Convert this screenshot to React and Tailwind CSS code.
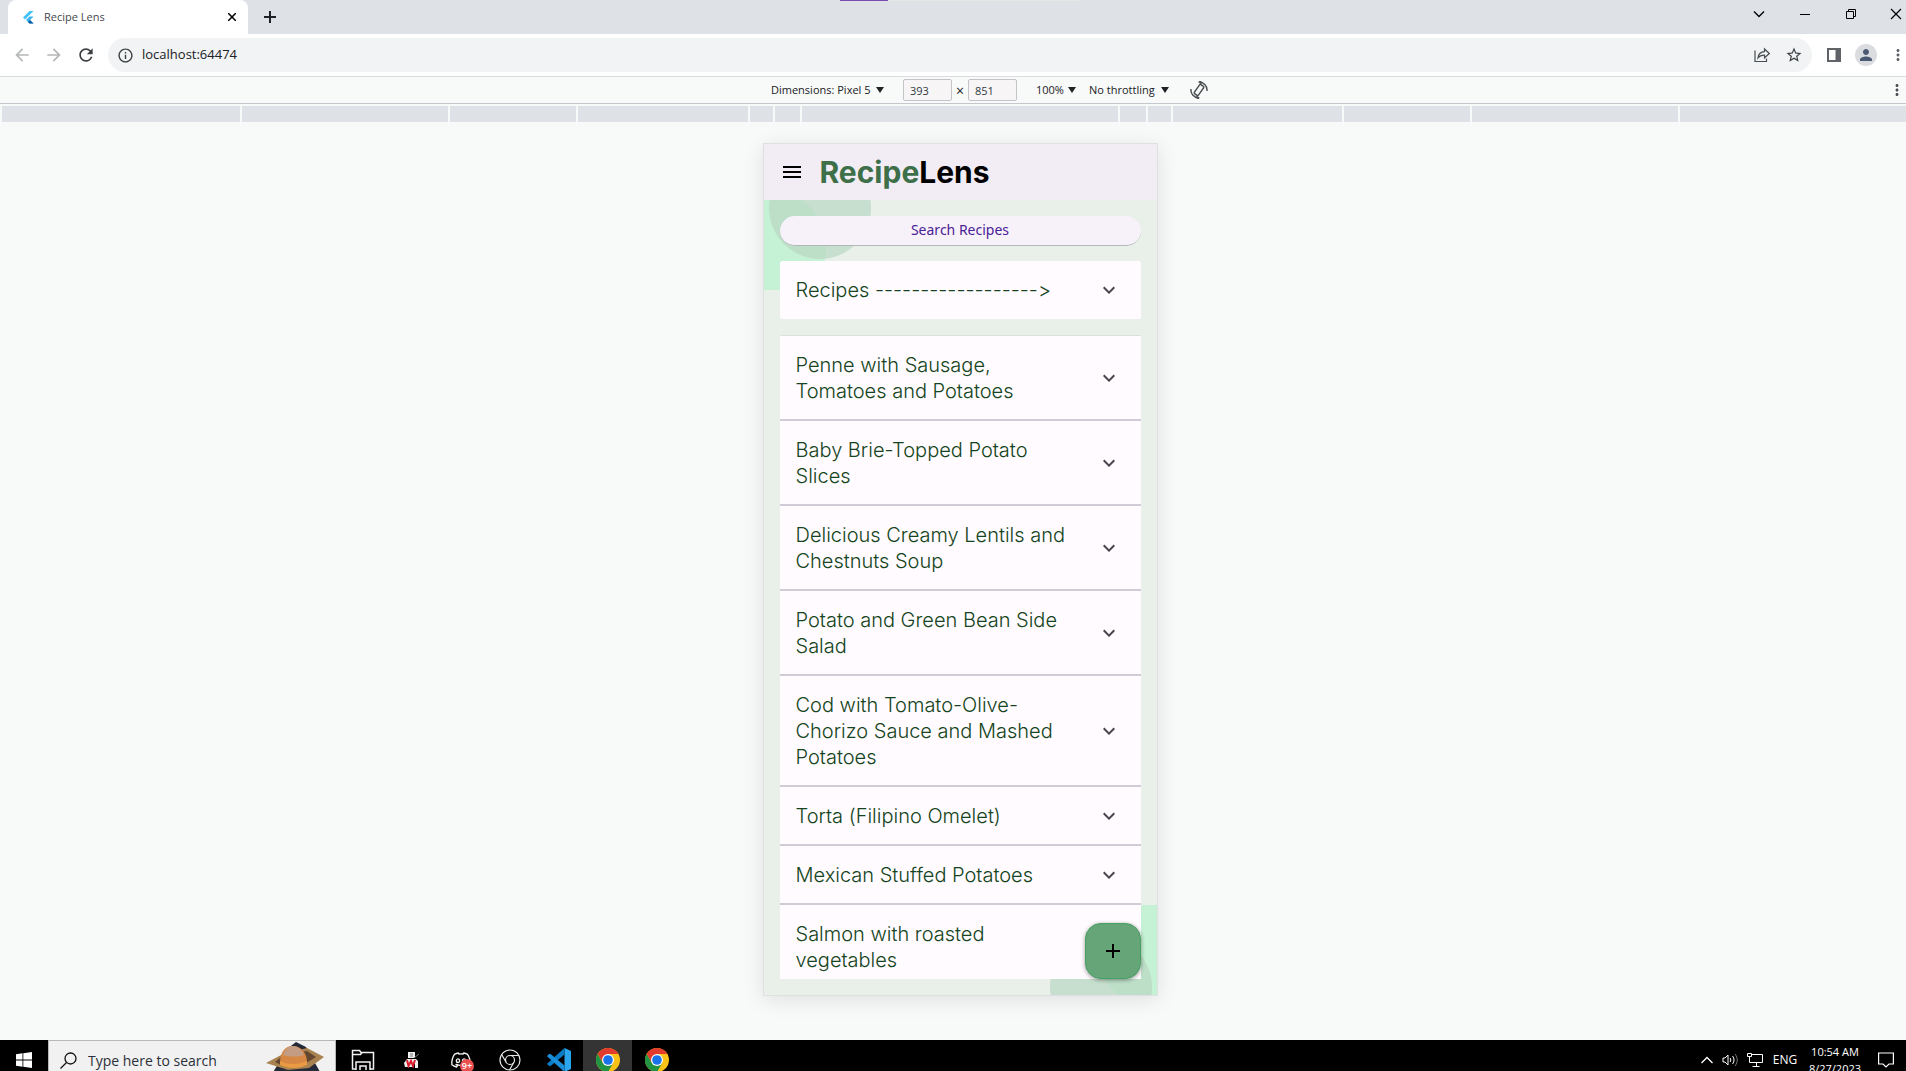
import React from 'react';
import {
  MdAdd,
  MdArrowBack,
  MdArrowForward,
  MdExpandMore,
  MdInfoOutline,
  MdMenu,
  MdMoreVert,
  MdPerson,
  MdRefresh,
  MdStarBorder,
} from 'react-icons/md';
import { FaDiscord } from 'react-icons/fa';

const recipes = [
  'Penne with Sausage, Tomatoes and Potatoes',
  'Baby Brie-Topped Potato Slices',
  'Delicious Creamy Lentils and Chestnuts Soup',
  'Potato and Green Bean Side Salad',
  'Cod with Tomato-Olive-Chorizo Sauce and Mashed Potatoes',
  'Torta (Filipino Omelet)',
  'Mexican Stuffed Potatoes',
  'Salmon with roasted vegetables',
];

// Device width presets shown on the ruler
const rulerSegments = [
  'w-[238px]', 'w-[206px]', 'w-[126px]', 'w-[170px]', 'w-[23px]', 'w-[25px]',
  'w-[316px]', 'w-[26px]', 'w-[23px]', 'w-[169px]', 'w-[126px]', 'w-[206px]',
];

function FlutterLogo() {
  return (
    <svg className="h-4 w-4" viewBox="0 0 16 16">
      <path d="M9.500 2 3 8.500l2 2L13.500 2z" fill="#42c3f7" />
      <path d="M9.500 7.500 6 11l3.500 3.500h4L10 11l3.500-3.500z" fill="#3ab4ee" />
      <path d="m8 13 1.500 1.500h4L10 11z" fill="#0d5aa0" />
    </svg>
  );
}

function TabStrip() {
  return (
    <header className="relative flex h-[34px] bg-[#dee1e6] pl-2">
      <div className="absolute left-[840px] top-0 flex h-px w-[241px] bg-[#e6e6e6]">
        <div className="w-12 bg-[#7a4bb0]" />
      </div>
      <div className="flex w-60 items-center rounded-t-lg bg-white pl-3 pr-2 text-[#45494d]">
        <FlutterLogo />
        <span className="ml-2 flex-1 text-[11px]">Recipe Lens</span>
        <button type="button" aria-label="Close tab" className="flex h-4 w-4 items-center justify-center text-black">
          <svg className="h-2 w-2" viewBox="0 0 8 8" stroke="currentColor" strokeWidth="1.5">
            <path d="M0 0l8 8M8 0L0 8" />
          </svg>
        </button>
      </div>
      <button type="button" aria-label="New tab" className="flex w-11 items-center justify-center text-[#202124]">
        <svg className="h-3 w-3" viewBox="0 0 12 12" stroke="currentColor" strokeWidth="2">
          <path d="M6 0v12M0 6h12" />
        </svg>
      </button>
      <div className="ml-auto flex h-7 text-black">
        <button type="button" aria-label="Search tabs" className="flex w-[46px] items-center justify-center">
          <svg className="h-3 w-3" viewBox="0 0 12 12" fill="none" stroke="currentColor" strokeWidth="1.3">
            <path d="M1 3.500l5 5 5-5" />
          </svg>
        </button>
        <button type="button" aria-label="Minimize" className="flex w-[46px] items-center justify-center">
          <svg className="h-3 w-3" viewBox="0 0 12 12" stroke="currentColor">
            <path d="M1 6.500h10" />
          </svg>
        </button>
        <button type="button" aria-label="Restore" className="flex w-[46px] items-center justify-center">
          <svg className="h-3 w-3" viewBox="0 0 12 12" fill="none" stroke="currentColor">
            <path d="M1.500 3.500h7v7h-7zM3.500 3.500v-2h7v7h-2" />
          </svg>
        </button>
        <button type="button" aria-label="Close" className="flex w-8 items-center justify-end pr-1">
          <svg className="h-3 w-3" viewBox="0 0 12 12" stroke="currentColor" strokeWidth="1.2">
            <path d="M1 1l10 10M11 1L1 11" />
          </svg>
        </button>
      </div>
    </header>
  );
}

function AddressBar() {
  return (
    <nav className="flex h-[43px] items-center border-b border-[#d9dbde] bg-white text-[#5f6368]">
      <div className="flex w-[108px] items-center gap-3 pl-3">
        <button type="button" aria-label="Back" className="text-[#b5b7b9]"><MdArrowBack size={20} /></button>
        <button type="button" aria-label="Forward" className="text-[#b5b7b9]"><MdArrowForward size={20} /></button>
        <button type="button" aria-label="Reload" className="text-[#3c4043]"><MdRefresh size={20} /></button>
      </div>
      <div className="flex h-[34px] flex-1 items-center rounded-full bg-[#f1f3f4] px-[9px]">
        <MdInfoOutline size={17} className="text-[#3c4043]" />
        <input
          type="text"
          aria-label="Address"
          defaultValue="localhost:64474"
          className="ml-2 flex-1 bg-transparent text-[13px] text-[#202124] outline-none"
        />
        <button type="button" aria-label="Share" className="mr-[15px] text-[#4a4d51]">
          <svg className="h-4 w-4" viewBox="0 0 16 16" fill="none" stroke="currentColor" strokeWidth="1.2">
            <path d="M1 3.500v11h11.500v-3M4 11c.3-4 2.500-6 6.500-6.300V2l4.800 4.500-4.800 4.300V8.200C7.500 8 5.500 9 4 11z" />
          </svg>
        </button>
        <button type="button" aria-label="Bookmark" className="text-[#3c4043]"><MdStarBorder size={18} /></button>
      </div>
      <div className="flex w-[94px] items-center pl-[15px]">
        <button type="button" aria-label="Side panel" className="shrink-0">
          <svg className="h-[14px] w-[14px]" viewBox="0 0 14 14">
            <path fillRule="evenodd" d="M0 0h14v14H0zM2 2v10h6.500V2z" fill="currentColor" />
          </svg>
        </button>
        <button
          type="button"
          aria-label="Profile"
          className="ml-[14px] flex h-[22px] w-[22px] shrink-0 items-center justify-center rounded-full bg-[#dadce0] text-[#4c5972]"
        >
          <MdPerson size={18} />
        </button>
        <button type="button" aria-label="Menu" className="ml-3 shrink-0"><MdMoreVert size={18} /></button>
      </div>
    </nav>
  );
}

function ToolbarSelect({ label, options, className }) {
  return (
    <div className={`relative flex items-center ${className}`}>
      <select aria-label={label} className="w-full appearance-none bg-transparent outline-none">
        {options.map((option) => (
          <option key={option}>{option}</option>
        ))}
      </select>
      <svg className="pointer-events-none absolute right-0 h-[6px] w-2" viewBox="0 0 8 6">
        <path d="M0 0h8L4 6z" fill="#202124" />
      </svg>
    </div>
  );
}

function RotateIcon() {
  return (
    <svg className="h-[18px] w-[18px]" viewBox="0 0 18 18" fill="none" stroke="currentColor" strokeWidth="1.400">
      <rect x="6.500" y="3.500" width="5" height="11" rx="1" transform="rotate(35 9 9)" />
      <path d="M1 8a8 8 0 0 0 8 9M17 10a8 8 0 0 0-8-9" />
      <path d="m6.500 14.500 3 2.400-2.500 1zM11.500 3.500l-3-2.400 2.500-1z" fill="currentColor" strokeWidth="0.500" />
    </svg>
  );
}

function DeviceToolbar() {
  const inputClass =
    'h-[22px] rounded-[2px] border border-[#c4c4c8] bg-[#f7f5f6] pl-[6px] text-[#303942] outline-none';

  return (
    <div className="flex h-[27px] items-center border-b border-[#c4c7cb] text-[11px] text-[#202124]">
      <div className="flex flex-1 items-center justify-center pl-[91px]">
        <ToolbarSelect label="Device" options={['Dimensions: Pixel 5']} className="w-[113px]" />
        <input type="text" aria-label="Width" defaultValue="393" className={`ml-[19px] w-[49px] ${inputClass}`} />
        <span className="w-4 text-center text-[14px]">×</span>
        <input type="text" aria-label="Height" defaultValue="851" className={`w-[49px] ${inputClass}`} />
        <ToolbarSelect label="Zoom" options={['100%']} className="ml-[19px] w-10" />
        <ToolbarSelect label="Throttling" options={['No throttling']} className="ml-[13px] w-20" />
        <button type="button" aria-label="Rotate" className="ml-[21px] text-[#4a4d51]">
          <RotateIcon />
        </button>
      </div>
      <button type="button" aria-label="More options" className="text-[#4a4d51]"><MdMoreVert size={18} /></button>
    </div>
  );
}

function Ruler() {
  return (
    <div className="flex gap-[2px] pl-[2px] pt-[2px]">
      {rulerSegments.map((width, index) => (
        <div key={index} className={`h-4 shrink-0 bg-[#dee1e6] ${width}`} />
      ))}
      <div className="h-4 flex-1 bg-[#dee1e6]" />
    </div>
  );
}

// Overlapping leaf coloured circles in two corners of the page
function CornerCircles({ className }) {
  return (
    <svg className={`absolute h-[90px] w-[107px] ${className}`} viewBox="0 0 107 90">
      <circle cx="2" cy="48" r="60" fill="#c5f1d4" />
      <circle cx="56" cy="8" r="51" fill="#b9d7c3" fillOpacity="0.700" />
    </svg>
  );
}

function RecipeTile({ title, className = '' }) {
  return (
    <button
      type="button"
      className={`flex w-full items-center bg-[#fffbff] pl-4 pr-5 pt-4 text-left text-[20px] leading-[26px] font-light text-[#144420] ${className}`}
    >
      <span className="w-[276px]">{title}</span>
      <MdExpandMore size={24} className="ml-auto shrink-0 text-[#49454f]" />
    </button>
  );
}

function RecipeApp() {
  return (
    <div className="relative flex h-[853px] w-[395px] flex-col overflow-hidden border border-[#dfdfe4] bg-[#e8f0e9] font-['Inter',sans-serif] [font-variant-ligatures:none] shadow-[0_4px_20px_rgba(0,0,0,0.10)]">
      <div className="flex h-14 shrink-0 items-center bg-[#f2edf5] pl-4">
        <button type="button" aria-label="Open menu" className="text-black"><MdMenu size={24} /></button>
        <h1 className="ml-4 text-[30px] font-bold text-black">
          <span className="text-[#3d6f49]">Recipe</span>Lens
        </h1>
      </div>
      <div className="relative flex min-h-0 flex-1 flex-col p-4">
        <CornerCircles className="left-0 top-0" />
        <CornerCircles className="bottom-0 right-0 rotate-180" />
        <div className="relative flex min-h-0 flex-1 flex-col overflow-hidden">
          <button
            type="button"
            className="mb-[15px] flex h-[30px] shrink-0 items-center justify-center rounded-full border-b border-[#b4b7b8] bg-[#f7f2fa] pb-[2px] font-['Noto_Sans',sans-serif] text-[14px] text-[#4a2196]"
          >
            Search Recipes
          </button>
          <RecipeTile title="Recipes ------------------>" className="shrink-0 rounded-[2px] pb-4" />
          <div className="mt-4 rounded-t-[2px] border-t border-[#dadfda]">
            {recipes.map((recipe) => (
              <RecipeTile key={recipe} title={recipe} className="border-b-2 border-[#d0cbd6] pb-[15px]" />
            ))}
          </div>
        </div>
        <button
          type="button"
          aria-label="Add recipe"
          className="absolute bottom-4 right-4 flex h-14 w-14 items-center justify-center rounded-2xl border border-[#45a062] bg-[#65a578] text-black shadow-[0_1px_4px_rgba(0,0,0,0.4)]"
        >
          <MdAdd size={24} />
        </button>
      </div>
    </div>
  );
}

function ChromeIcon() {
  return (
    <svg className="h-6 w-6" viewBox="0 0 24 24">
      <circle cx="12" cy="12" r="12" fill="#fbc116" />
      <path d="M1.600 6A12 12 0 0 1 22.400 6H12L6.800 15z" fill="#e33b2e" />
      <path d="M1.600 6A12 12 0 0 0 12 24l5.200-9H6.800z" fill="#229342" />
      <circle cx="12" cy="12" r="6" fill="#fff" />
      <circle cx="12" cy="12" r="4.800" fill="#1a73e8" />
    </svg>
  );
}

function ChromeOutlineIcon() {
  return (
    <svg className="h-[22px] w-[22px]" viewBox="0 0 22 22" fill="none" stroke="#e8e8e8" strokeWidth="1.2">
      <circle cx="11" cy="11" r="10" />
      <circle cx="11" cy="11" r="4.500" />
      <path d="M11 6.500h9M7.100 13.300 2.600 5.500M14.900 13.300 10.500 21" />
    </svg>
  );
}

function CodeIcon() {
  return (
    <svg className="h-6 w-6" viewBox="0 0 24 24">
      <path d="M17.500 0 24 3v18l-6.500 3z" fill="#2aa5ee" />
      <path d="M17.500 0v6.500L3.300 18.200 1 17.200l-1-1.500z" fill="#0a7bc4" />
      <path d="M17.500 24v-6.500L3.300 5.800 1 6.800 0 8.300z" fill="#1a8ed8" />
    </svg>
  );
}

function ExplorerIcon() {
  return (
    <svg className="h-[22px] w-6" viewBox="0 0 24 22" fill="none" stroke="#f2f2f2" strokeWidth="1.500">
      <path d="M5 20H1.500V1.500h7l1.500 2h12.500V20H19M1.500 5.500h8l1.500-2M5 21v-8h14v8M9 21v-4h6v4" />
    </svg>
  );
}

function RobotIcon() {
  return (
    <svg className="h-4 w-4" viewBox="0 0 16 16">
      <path d="M4 0h7v6H4zM0 11l3-4h9l2 2v7h-3v-4H9v3H1z" fill="#f0f0f0" />
      <path d="M6 2h3M6 4h3M10 6l5-4" fill="none" stroke="#777" />
      <path d="m3 8 1.500 6L7 9l2 5 2-6" fill="none" stroke="#d81e2c" strokeWidth="2" />
    </svg>
  );
}

// Seasonal artwork on the right of the search box
function HatArt() {
  return (
    <svg className="h-[37px] w-[62px] shrink-0" viewBox="0 0 62 37">
      <path d="M22 7 31 0l10 5 18 32H4z" fill="#252a38" />
      <path d="M1 21 18 12 42 6l17 9-15 11-21 2z" fill="#a8824f" />
      <path d="M10 20 20 12l22-3 9 6-13 8-18 2z" fill="#634730" />
      <path d="M15 21C15 10 20 4 28 4s14 7 14 16c-8 5-20 5-27 1z" fill="#d58743" />
      <path d="M18 13c2-6 6-9 10-9 5 0 9 4 11 9-6 2-14 2-21 0z" fill="#c49b83" />
      <path d="M15 19c7 4 19 4 27 0v4c-8 4-20 4-27 0z" fill="#e99b43" />
    </svg>
  );
}

function Taskbar() {
  const appClass = 'flex h-10 w-[49px] items-center justify-center';

  return (
    <footer className="h-[31px] overflow-hidden bg-black text-white">
      <div className="flex h-10 items-center">
        <button type="button" aria-label="Start" className="flex w-12 items-center justify-center">
          <svg className="h-4 w-4" viewBox="0 0 16 16" fill="#fff">
            <path d="M0 2.200 6.500 1.300v6.200H0zM7.300 1.200 16 0v7.500H7.300zM0 8.400h6.500v6.300L0 13.800zM7.300 8.400H16V16l-8.700-1.200z" />
          </svg>
        </button>
        <div className="flex h-10 w-[288px] items-center border border-[#b8b8b8] bg-[#f1f1f1] pl-[11px] pr-2 text-[#2b3038]">
          <svg className="h-[17px] w-[17px] shrink-0" viewBox="0 0 17 17" fill="none" stroke="#111" strokeWidth="1.300">
            <circle cx="10.500" cy="6.500" r="5.500" />
            <path d="M6.500 10.500.500 16.500" />
          </svg>
          <input
            type="text"
            aria-label="Type here to search"
            placeholder="Type here to search"
            className="ml-[11px] min-w-0 flex-1 bg-transparent text-[14px] outline-none placeholder:text-[#2b3038]"
          />
          <HatArt />
        </div>
        <div className="flex pl-[2px]">
          <button type="button" aria-label="File Explorer" className={appClass}><ExplorerIcon /></button>
          <button type="button" aria-label="Robot" className={appClass}><RobotIcon /></button>
          <button type="button" aria-label="Discord" className={`relative ${appClass}`}>
            <FaDiscord size={20} fill="#000" stroke="#f0f0f0" strokeWidth={44} className="overflow-visible" />
            <span className="absolute bottom-[7px] right-[11px] flex h-[14px] w-[14px] items-center justify-center rounded-full bg-[#e8504f] text-[9px] leading-[12px] font-semibold">
              9+
            </span>
          </button>
          <button type="button" aria-label="Chromium" className={appClass}><ChromeOutlineIcon /></button>
          <button type="button" aria-label="Visual Studio Code" className={appClass}><CodeIcon /></button>
          <button type="button" aria-label="Chrome" className={`bg-[#343434] ${appClass}`}><ChromeIcon /></button>
          <button type="button" aria-label="Chrome debug" className={appClass}><ChromeIcon /></button>
        </div>
        <div className="ml-auto flex items-center pr-3">
          <svg className="h-3 w-3" viewBox="0 0 12 12" fill="none" stroke="#fff" strokeWidth="1.300">
            <path d="M.5 9 6 3.500 11.500 9" />
          </svg>
          <svg className="ml-[9px] h-4 w-[17px]" viewBox="0 0 17 16" fill="none" stroke="#fff">
            <path d="M1 6h2l3-3v10L3 10H1zM8 6c1 1.300 1 2.700 0 4M10.500 4c2 2.500 2 5.500 0 8" />
            <path d="M13 2c3 4 3 8 0 12" stroke="#777" />
          </svg>
          <svg className="ml-2 h-4 w-4" viewBox="0 0 16 16" fill="none" stroke="#fff">
            <path d="M5 2.500h10.500v8H4M.5 1.500h4v3h-4zM2.500 5v5.500H5M9.500 11v3M5.500 14.500h7" />
          </svg>
          <span className="w-11 text-center text-[12px]">ENG</span>
          <time className="flex w-14 flex-col text-center text-[11px] leading-[17px] whitespace-nowrap">
            <span>10:54 AM</span>
            <span>8/27/2023</span>
          </time>
          <svg className="ml-[15px] h-4 w-4" viewBox="0 0 16 16" fill="none" stroke="#fff" strokeWidth="1.200">
            <path d="M.6 1h14.800v11H11l-3 3-3-3H.6z" />
          </svg>
        </div>
      </div>
    </footer>
  );
}

export default function App() {
  return (
    <div className="flex min-h-screen flex-col bg-[#f8faf9] font-['Open_Sans',sans-serif]">
      <TabStrip />
      <AddressBar />
      <DeviceToolbar />
      <Ruler />
      <main className="flex flex-1 justify-center pb-[22px] pl-[14px] pt-[21px]">
        <RecipeApp />
      </main>
      <Taskbar />
    </div>
  );
}
